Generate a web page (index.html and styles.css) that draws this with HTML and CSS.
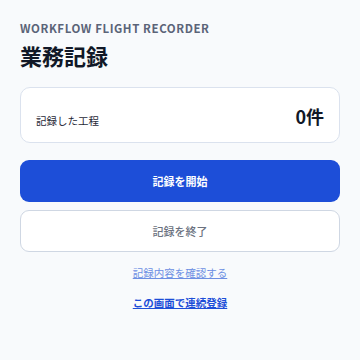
FILE: index.html
```html
<!DOCTYPE html>
<html lang="ja">

<head>
    <meta charset="UTF-8">
    <meta name="viewport" content="width=device-width, initial-scale=1.0">
    <title>業務記録</title>
    <link rel="stylesheet" href="styles.css">
</head>

<body>
    <div class="wrap">
        <div class="head">
            <p class="eyebrow">Workflow Flight Recorder</p>
            <h1 class="title">業務記録</h1>
        </div>
        <div class="card">
            <span class="card_label">記録した工程</span>
            <span class="card_value">0件</span>
        </div>
        <div class="actions">
            <a href="javascript:;" class="btn btn_primary">記録を開始</a>
            <a href="javascript:;" class="btn btn_ghost">記録を終了</a>
        </div>
        <div class="links">
            <a href="javascript:;" class="link link_muted">記録内容を確認する</a>
            <a href="javascript:;" class="link link_strong">この画面で連続登録</a>
        </div>
    </div>
</body>

</html>
```

FILE: styles.css
```css
* {
    margin: 0;
    padding: 0;
    box-sizing: border-box;
}

body {
    background: #f8fafc;
    font-family: "Noto Sans CJK JP", "Noto Sans", sans-serif;
    color: #0f172a;
}

body a {
    text-decoration: none;
}

.wrap {
    padding: 20px;
}

.eyebrow {
    font-size: 11.5px;
    line-height: 16px;
    font-weight: 700;
    letter-spacing: 0.05em;
    text-transform: uppercase;
    color: #5b6478;
}

.title {
    margin-top: 5px;
    font-size: 22px;
    line-height: 28px;
    font-weight: 700;
    color: #111827;
}

.card {
    margin-top: 18px;
    height: 56px;
    padding: 0 15px 14px;
    display: flex;
    align-items: flex-end;
    justify-content: space-between;
    background: #fff;
    border: 1px solid #dbe2ee;
    border-radius: 10px;
}

.card_label {
    font-size: 10.5px;
    line-height: 14px;
    color: #1f2937;
}

.card_value {
    font-size: 18px;
    line-height: 24px;
    font-weight: 700;
    color: #111827;
}

.actions {
    margin-top: 17px;
    display: flex;
    flex-direction: column;
    gap: 8px;
}

.btn {
    height: 42px;
    display: flex;
    align-items: center;
    justify-content: center;
    border-radius: 9px;
    font-size: 11px;
    font-weight: 700;
}

.btn_primary {
    background: #1d4ed8;
    color: #fff;
}

.btn_ghost {
    background: #fff;
    border: 1px solid #cfd7e3;
    color: #6b7280;
    font-weight: 500;
}

.links {
    margin-top: 13px;
    display: flex;
    flex-direction: column;
    align-items: center;
    gap: 14px;
}

.link {
    font-size: 10.5px;
    line-height: 16px;
    text-decoration: underline;
}

.link_muted {
    color: #6d8fe3;
}

.link_strong {
    color: #1d4ed8;
    font-weight: 700;
}
```
